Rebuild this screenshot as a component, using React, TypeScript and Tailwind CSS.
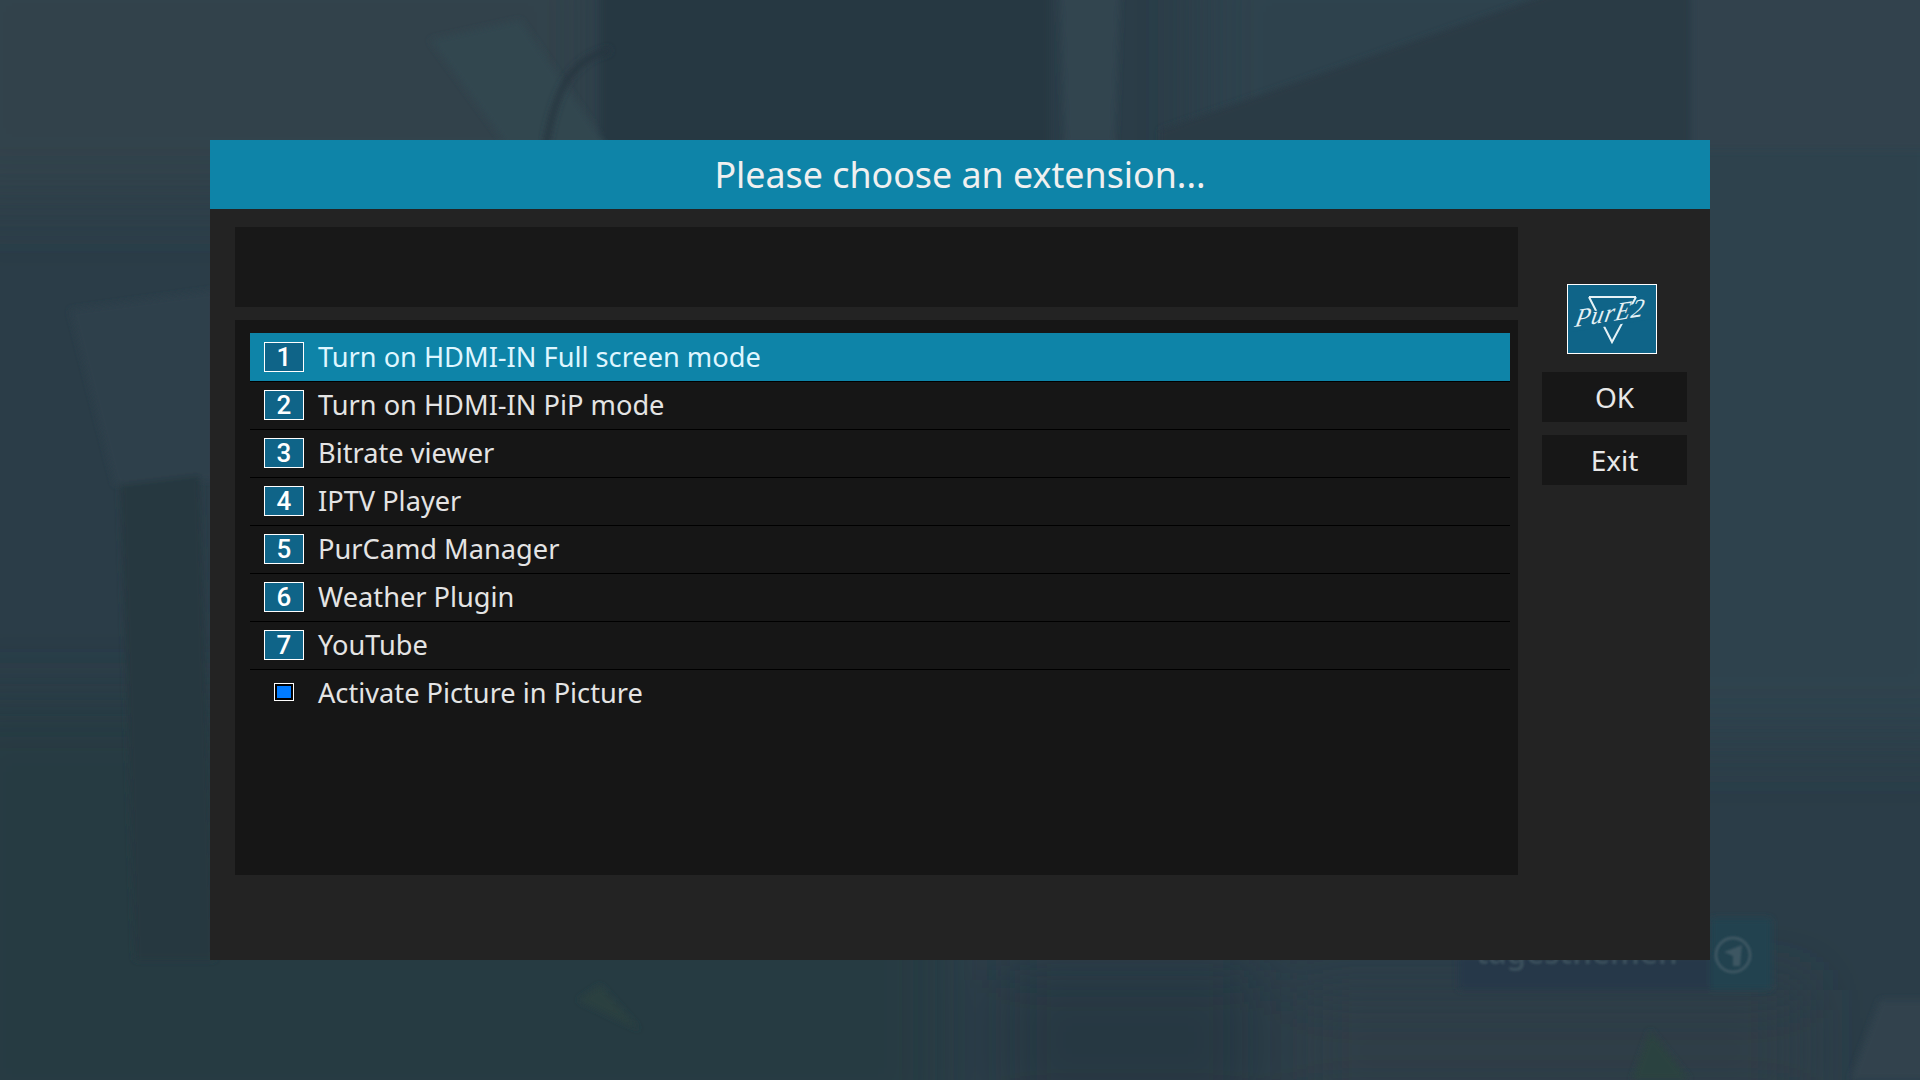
const items = [
  "Turn on HDMI-IN Full screen mode",
  "Turn on HDMI-IN PiP mode",
  "Bitrate viewer",
  "IPTV Player",
  "PurCamd Manager",
  "Weather Plugin",
  "YouTube",
];

function Backdrop() {
  return (
    <svg className="absolute inset-0 h-full w-full" viewBox="0 0 1920 1080">
      <defs>
        <filter id="hair">
          <feGaussianBlur stdDeviation="1" />
        </filter>
        <filter id="soft">
          <feGaussianBlur stdDeviation="3" />
        </filter>
        <filter id="softer">
          <feGaussianBlur stdDeviation="30" />
        </filter>
      </defs>
      <rect width="1920" height="1080" fill="#2b3d48" />
      <g filter="url(#softer)">
        <rect x="-60" y="-60" width="660" height="260" fill="#31434c" />
        <rect x="1200" y="-60" width="780" height="800" fill="#2f424d" />
        <rect x="-60" y="700" width="1010" height="440" fill="#273a43" />
        <rect x="1000" y="960" width="260" height="160" fill="#263743" />
        <rect x="1300" y="990" width="500" height="120" fill="#2d3d47" />
      </g>
      <g filter="url(#soft)">
        <rect x="600" y="-10" width="450" height="160" fill="#263843" />
        <polygon points="1160,150 1160,130 1560,-10 1690,-10 1690,150" fill="#293a45" />
        <polygon points="430,40 520,20 610,150 510,150" fill="#324650" />
        <polygon points="1060,-10 1120,-10 1115,145 1065,145" fill="#304550" />
        <rect x="1692" y="-10" width="240" height="160" fill="#31434e" />
        <polygon points="70,310 215,290 215,480 115,485" fill="#2e414b" />
        <polygon points="120,485 200,475 215,960 135,960" fill="#28393f" />
        <rect x="1458" y="955" width="312" height="35" rx="4" fill="#26394a" />
        <rect x="1710" y="918" width="62" height="72" rx="4" fill="#23424f" />
        <polygon points="1632,1080 1650,1030 1690,1080" fill="#2c4240" />
        <polygon points="1850,1080 1880,1000 1930,1000 1930,1080" fill="#33434e" />
        <polygon points="578,1000 600,985 640,1030" fill="#29403f" />
      </g>
      <path
        d="M545 150 C555 90 570 60 610 50"
        fill="none"
        stroke="#263640"
        strokeWidth="6"
        filter="url(#soft)"
      />
      <g filter="url(#hair)">
        <circle cx="1733" cy="955" r="17" fill="none" stroke="#3c5662" strokeWidth="3" />
        <polygon points="1724,952 1742,945 1740,966 1733,966 1733,956" fill="#3c5662" />
        <text
          x="1476"
          y="964"
          fill="#3b4f5b"
          fontFamily="'Noto Sans', sans-serif"
          fontSize="31"
          fontWeight="600"
        >
          tagesthemen
        </text>
      </g>
    </svg>
  );
}

function Logo() {
  return (
    <div className="flex h-[70px] w-[90px] items-center justify-center border border-white bg-[#0f6488]">
      <svg viewBox="0 0 88 68" className="h-[68px] w-[88px]">
        <path d="M21 12 H68 M21 12 L44 57 L68 12" fill="none" stroke="#e6f2f6" strokeWidth="2" />
        <polygon points="4,30 84,16 84,34 4,47" fill="#0f6488" />
        <text
          transform="translate(6 42) rotate(-9) skewX(-20)"
          fill="#e6f2f6"
          fontFamily="'Liberation Serif', serif"
          fontStyle="italic"
          fontSize="25"
          letterSpacing="1"
        >
          PurE2
        </text>
      </svg>
    </div>
  );
}

function App() {
  return (
    <div className="relative h-screen w-full overflow-hidden bg-[#2b3d48] font-['Noto_Sans',sans-serif]">
      <Backdrop />

      <div className="relative ml-[210px] pt-[140px]">
        <div className="h-[820px] w-[1500px] bg-[#232323]">
          <div className="flex h-[69px] items-center justify-center bg-[#0e84a8] text-[35.8px] text-[#f0f0f0]">
            Please choose an extension...
          </div>

          <div className="flex pt-[18px] pl-[25px]">
            <div className="w-[1283px]">
              <div className="h-[80px] bg-[#181818]" />

              <div className="mt-[13px] h-[555px] bg-[#161616] pt-[13px] pr-[8px] pl-[15px]">
                {items.map((item, i) => (
                  <div
                    key={item}
                    className={
                      i === 0
                        ? "flex h-[48px] items-center bg-[#0e84a8] pl-[14px] text-[27.2px] text-[#dff6ff]"
                        : "flex h-[48px] items-center border-t border-black pb-[1px] pl-[14px] text-[27.2px] text-[#e4e4e4]"
                    }
                  >
                    <span className="flex h-[30px] w-[40px] items-center justify-center border border-white bg-[#0f6488] font-['Roboto',sans-serif] text-[26px] font-medium text-white">
                      {i + 1}
                    </span>
                    <span className="ml-[14px]">{item}</span>
                  </div>
                ))}

                <div className="flex h-[48px] items-center border-t border-black pb-[1px] pl-[24px] text-[27.2px] text-[#e4e4e4]">
                  <span className="mb-[2px] h-[18px] w-[20px] border border-white bg-[#007bff] shadow-[inset_0_0_0_2px_#000]" />
                  <span className="ml-[24px]">Activate Picture in Picture</span>
                </div>
              </div>
            </div>

            <div className="ml-[24px] w-[145px] pt-[57px]">
              <div className="ml-[25px]">
                <Logo />
              </div>
              <div className="mt-[18px] flex h-[50px] items-center justify-center bg-[#171717] text-[28px] text-[#e8e8e8]">
                OK
              </div>
              <div className="mt-[13px] flex h-[50px] items-center justify-center bg-[#171717] text-[28px] text-[#e8e8e8]">
                Exit
              </div>
            </div>
          </div>
        </div>
      </div>
    </div>
  );
}

export default App;
